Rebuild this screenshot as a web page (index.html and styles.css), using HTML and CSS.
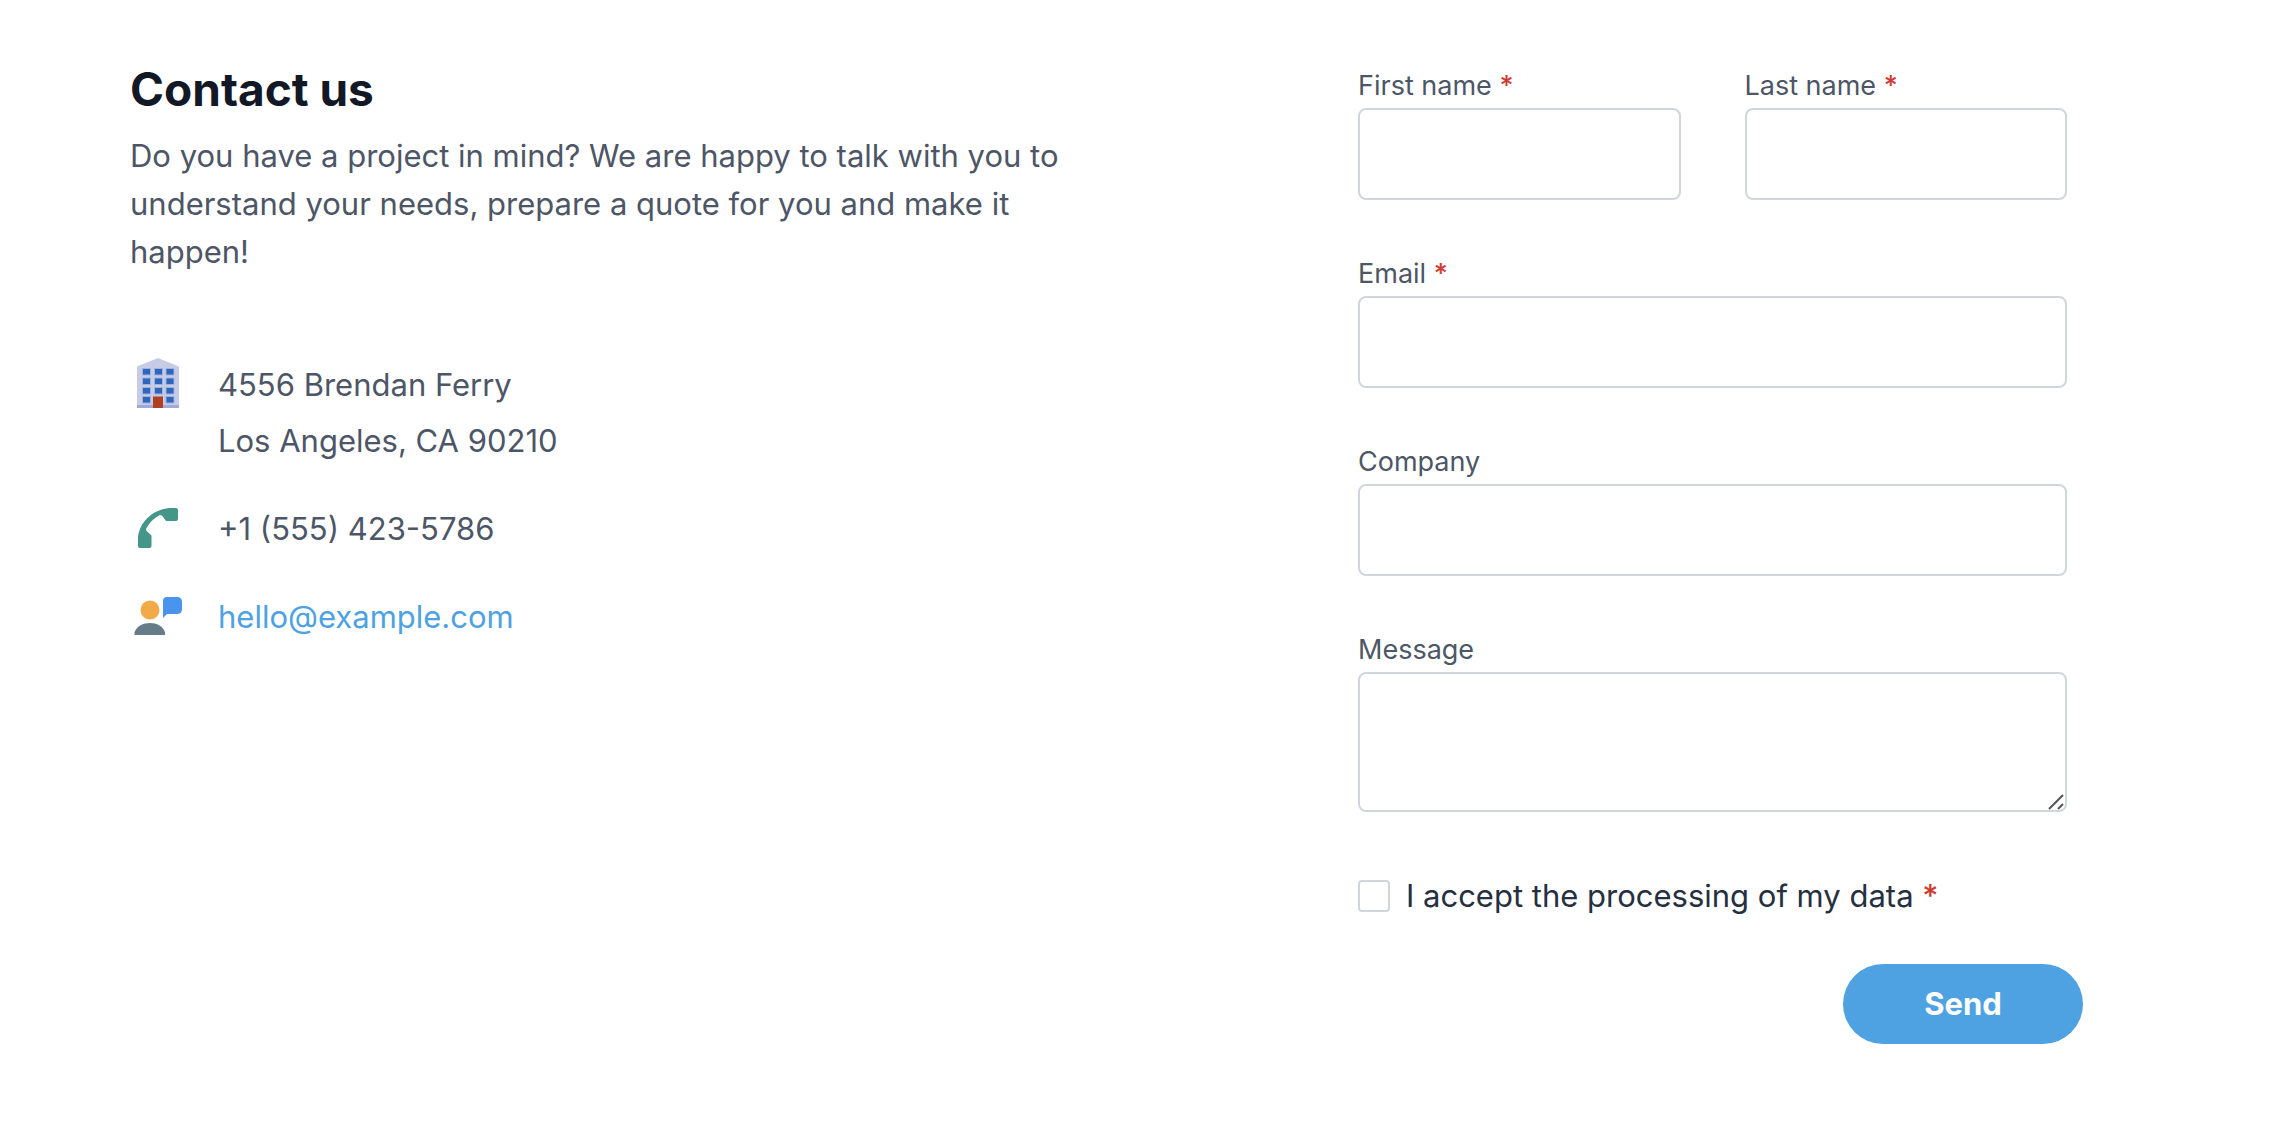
FILE: index.html
```html
<!DOCTYPE html>
<html lang="en">
<head>
<meta charset="utf-8">
<meta name="viewport" content="width=device-width, initial-scale=1">
<title>Contact us</title>
<link rel="stylesheet" href="styles.css">
</head>
<body>
<main class="contact">
  <section class="intro">
    <h1 class="title">Contact us</h1>
    <p class="lead">Do you have a project in mind? We are happy to talk with you to understand your needs, prepare a quote for you and make it happen!</p>
    <ul class="details">
      <li class="detail">
        <svg class="icon" viewBox="0 3 56 56" aria-hidden="true">
          <path fill="#c6cbe6" d="M7 53V12.500L28 4l21 8.500V53z"/>
          <path fill="#a1a9d8" d="M7 51h42v3H7z"/>
          <path fill="#b04020" d="M23 42.500h10V54H23z"/>
          <path fill="#2f66bd" stroke="#9fb2dd" stroke-width="1" d="M12.500 14.500h8v6.500h-8zm12 0h8v6.500h-8zm11.500 0h8v6.500h-8zM12.500 24h8v6.500h-8zm12 0h8v6.500h-8zm11.500 0h8v6.500h-8zM12.500 33.500h8V40h-8zm12 0h8V40h-8zm11.500 0h8V40h-8zM12.500 42.500h8V49h-8zm23.500 0h8V49h-8z"/>
        </svg>
        <address class="address">4556 Brendan Ferry<br>Los Angeles, CA 90210</address>
      </li>
      <li class="detail">
        <svg class="icon" viewBox="0 3 56 56" aria-hidden="true">
          <path fill="#439688" d="M46 10H40C22 11 8 26 8 41v7q0 2 2 2h9.500q2 0 2-2V37.500L16.500 33l-.5-2c4-7 8-11 14-14l2 .5 4 5.500h10q2 0 2-2v-9q0-2-2-2z"/>
        </svg>
        <span>+1 (555) 423-5786</span>
      </li>
      <li class="detail">
        <svg class="icon" viewBox="0 3 56 56" aria-hidden="true">
          <circle cx="20" cy="24" r="9.500" fill="#f2a947"/>
          <path fill="#667c89" d="M4.500 49v-3C7 40 13 37 20 37s12.500 3 15 9v3z"/>
          <path fill="#4b94ed" d="M37 11h10q5 0 5 5v7q0 5-5 5H37l-4 4V15q0-4 4-4z"/>
        </svg>
        <a class="link" href="mailto:hello@example.com">hello@example.com</a>
      </li>
    </ul>
  </section>
  <form class="form">
    <div class="fields">
      <div class="field">
        <label class="label" for="first">First name <span class="required">*</span></label>
        <input class="control" id="first" type="text" required>
      </div>
      <div class="field">
        <label class="label" for="last">Last name <span class="required">*</span></label>
        <input class="control" id="last" type="text" required>
      </div>
      <div class="field wide">
        <label class="label" for="email">Email <span class="required">*</span></label>
        <input class="control" id="email" type="email" required>
      </div>
      <div class="field wide">
        <label class="label" for="company">Company</label>
        <input class="control" id="company" type="text">
      </div>
      <div class="field wide">
        <label class="label" for="message">Message</label>
        <div class="message">
          <textarea class="control area" id="message"></textarea>
          <svg class="grip" viewBox="0 0 16 16" aria-hidden="true"><path d="M1 15L15 1M10 15l5-5" fill="none" stroke="#555" stroke-width="2"/></svg>
        </div>
      </div>
    </div>
    <div class="consent">
      <input class="check" id="consent" type="checkbox" required>
      <label for="consent">I accept the processing of my data <span class="required">*</span></label>
    </div>
    <button class="send" type="submit">Send</button>
  </form>
</main>
</body>
</html>
```
FILE: styles.css
```css
* { box-sizing: border-box; }

body {
  margin: 0;
  background: #fff;
  color: #4d5666;
  font: 31px/48px Inter, "Liberation Sans", sans-serif;
}

.contact {
  display: grid;
  grid-template-columns: 936fr 725fr;
  gap: 292px;
  padding: 64px 199px 64px 130px;
}

.title {
  margin: 0 0 18px;
  color: #131827;
  font-size: 46px;
  font-weight: 700;
  line-height: 50px;
}

.lead { margin: 0 0 81px; }

.details {
  display: grid;
  gap: 32px;
  margin: 0;
  padding: 0;
  list-style: none;
  line-height: 56px;
}

.detail { display: flex; gap: 32px; }
.icon { flex: none; width: 56px; height: 56px; }
.address { font-style: normal; }
.link { color: #4ea2e2; text-decoration: none; }

.form { display: flex; flex-direction: column; }

.fields {
  display: grid;
  grid-template-columns: 1fr 1fr;
  gap: 52px 64px;
  margin-right: 16px;
}

.field { display: flex; flex-direction: column; min-width: 0; }
.wide { grid-column: 1 / -1; }
.label { font-size: 27px; line-height: 44px; }
.required { color: #cf3a32; font-weight: 500; }

.control {
  display: block;
  width: 100%;
  height: 92px;
  padding: 16px 24px;
  border: 2px solid #d2d6dc;
  border-radius: 8px;
  background: #fff;
  color: #252f3f;
  font: inherit;
}

.message { position: relative; }
.area { height: 140px; resize: none; }
.grip { position: absolute; right: 3px; bottom: 2px; width: 16px; height: 16px; pointer-events: none; }

.consent {
  display: flex;
  align-items: center;
  gap: 16px;
  margin-top: 60px;
  color: #252f3f;
}

.check {
  appearance: none;
  width: 32px;
  height: 32px;
  margin: 0;
  border: 2px solid #d2d6dc;
  border-radius: 4px;
  background: #fff;
}
.check:checked { background: #4ea2e2; }

.send {
  align-self: flex-end;
  width: 240px;
  height: 80px;
  margin-top: 44px;
  border: 0;
  border-radius: 40px;
  background: #4ea2e2;
  color: #fff;
  font: inherit;
  font-weight: 700;
}
```
